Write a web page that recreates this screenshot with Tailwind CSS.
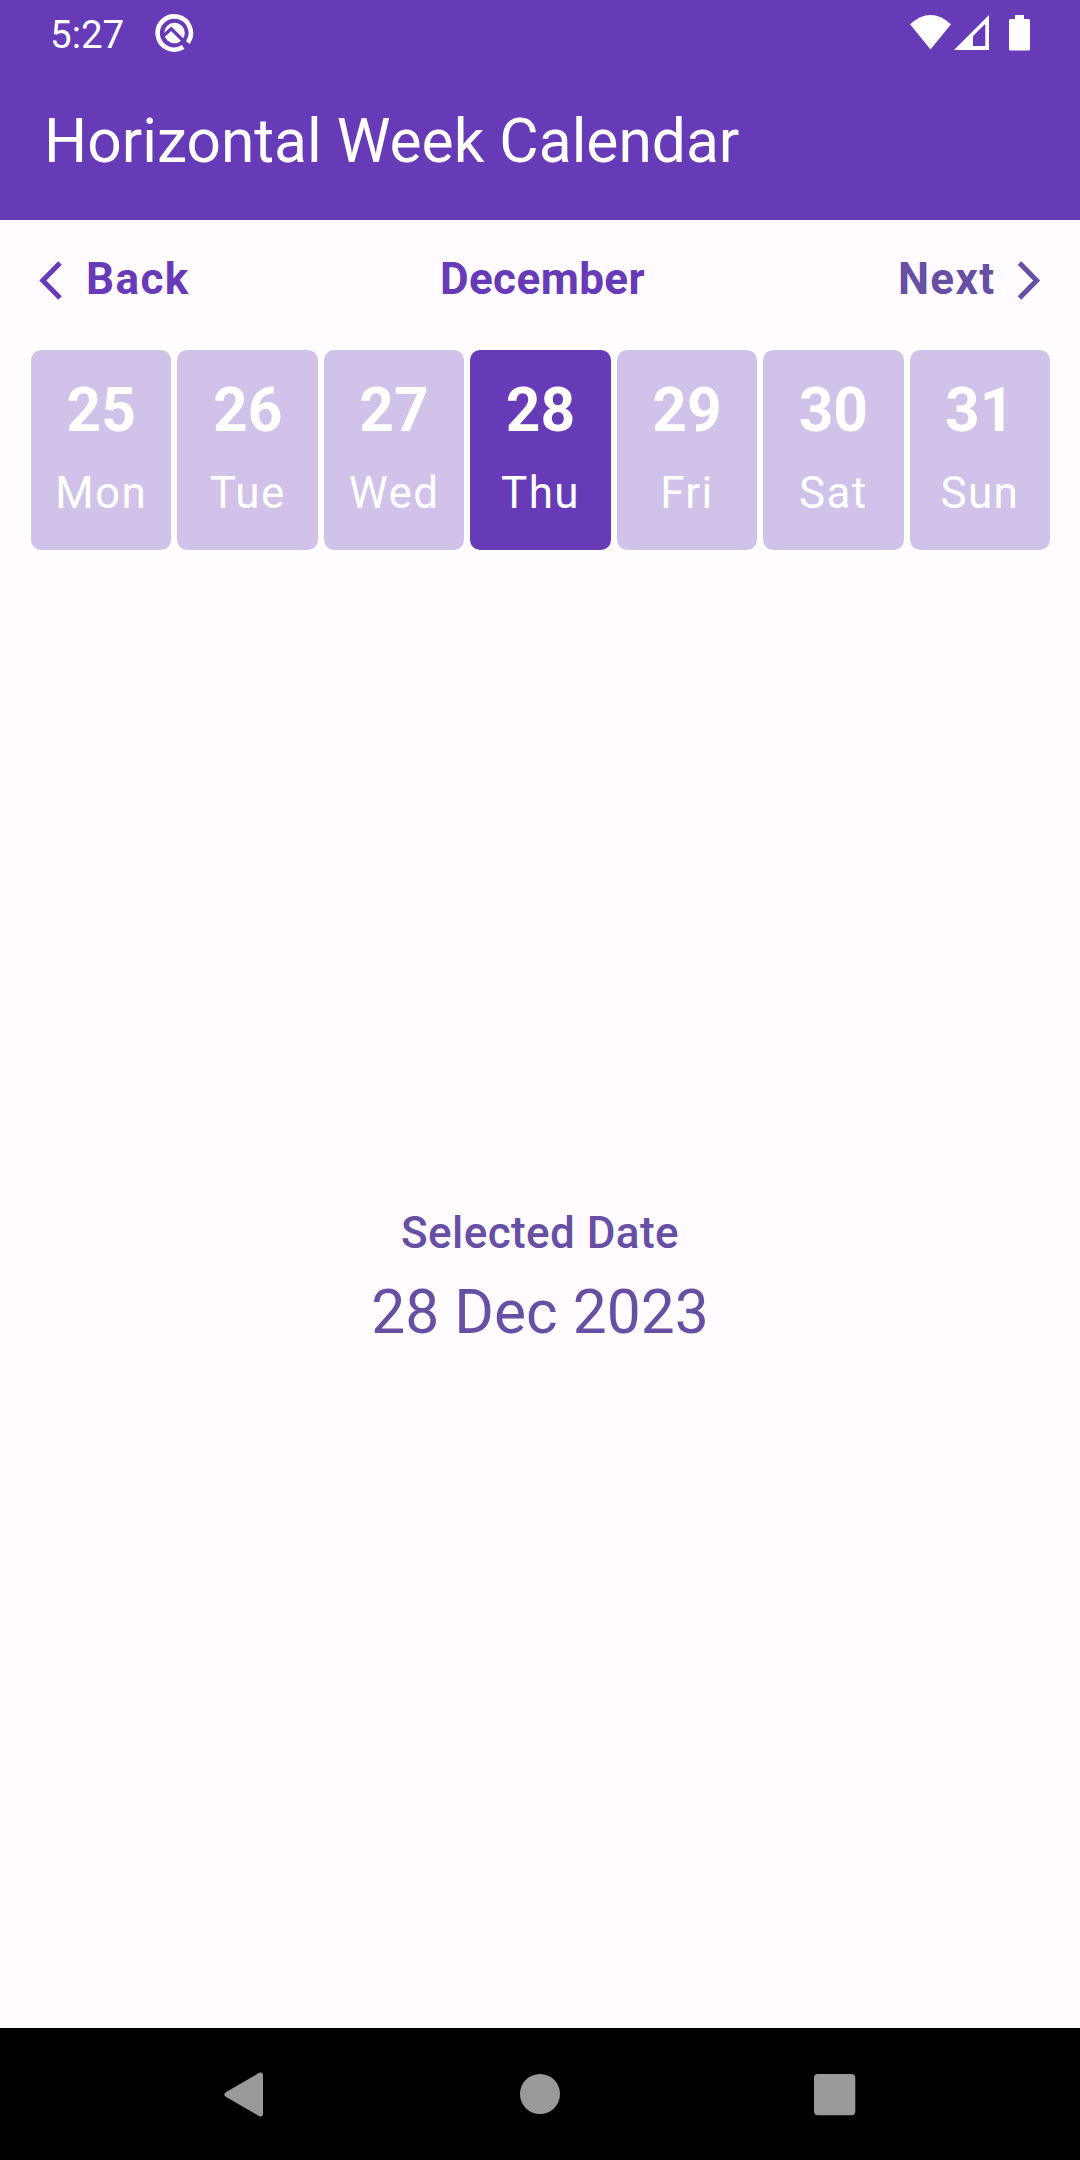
<!DOCTYPE html>
<html lang="en">
<head>
<meta charset="utf-8">
<title>Horizontal Week Calendar</title>
<script src="https://cdn.jsdelivr.net/npm/@tailwindcss/browser@4"></script>
</head>
<body class="flex h-[2160px] w-[1080px] flex-col overflow-hidden bg-[#fffbff] font-[Roboto,sans-serif] text-[44px] leading-[52px] text-[#673ab7]">
  <header class="h-[220px] shrink-0 bg-[#673ab7] text-white">
    <div class="flex h-[66px] items-start justify-between pl-[50px] pr-[48px]">
      <div class="flex pt-[12px]">
        <span class="w-[104px] text-[38.5px] leading-[46px]">5:27</span>
        <svg class="mt-[1px] h-[40px] w-[40px]" viewBox="0 0 40 40" fill="none">
          <path d="M29.2 34A16.6 16.6 0 1 1 33.8 29.6" stroke="#fff" stroke-width="4.6"/>
          <circle cx="20.5" cy="20" r="10.3" fill="#fff"/>
          <path d="M7.500 24.500L17.200 15.800L31.500 30" stroke="#673ab7" stroke-width="3.400"/>
          <path d="M28 28L34.500 34.500" stroke="#673ab7" stroke-width="2.600"/>
        </svg>
      </div>
      <svg class="h-[66px] w-[122px]" viewBox="910 0 122 66" fill="#fff">
        <path d="M910 24.300Q930.500 5.800 951 24.300L930.500 49.500Z"/>
        <path fill-rule="evenodd" d="M954 50L989 15V50ZM973 46H985.300V23.800L973 36Z"/>
        <path d="M1015 15H1024V19H1028.500Q1030 19 1030 20.500V49Q1030 50.500 1028.500 50.500H1010.500Q1009 50.500 1009 49V20.500Q1009 19 1010.500 19H1015Z"/>
      </svg>
    </div>
    <h1 class="pl-[44px] pt-[41px] text-[60.5px] leading-[70px]">Horizontal Week Calendar</h1>
  </header>

  <main class="flex grow flex-col">
    <nav class="grid h-[127px] grid-cols-3 items-start pl-[38px] pr-[38px] pt-[33px] font-bold">
      <button class="flex">
        <svg class="h-[54px] w-[48px]" viewBox="38 253 48 54" fill="none" stroke="#673ab7" stroke-width="5"><path d="M60 263L42.800 280.500L60 298"/></svg>
        <span class="tracking-[1.375px]">Back</span>
      </button>
      <span class="pl-[5px] text-center tracking-[0.4125px]">December</span>
      <button class="flex justify-end text-[#6750a4]">
        <span class="tracking-[1.375px]">Next</span>
        <svg class="h-[54px] w-[46.5px]" viewBox="995.5 253 46.5 54" fill="none" stroke="#6750a4" stroke-width="5"><path d="M1020 263L1037.200 280.500L1020 298"/></svg>
      </button>
    </nav>

    <section id="week" class="grid h-[206px] grid-cols-7 pl-[28px] pr-[27px] text-center text-white"></section>

    <section class="flex grow flex-col items-center pt-[654px] text-[#6750a4]">
      <h2 class="font-medium tracking-[0.4125px]">Selected Date</h2>
      <p class="mt-[19px] text-[60.5px] leading-[70px]">28 Dec 2023</p>
    </section>
  </main>

  <footer class="h-[132px] shrink-0 bg-black">
    <svg class="h-[132px] w-[1080px]" viewBox="0 2028 1080 132" fill="#999">
      <path d="M227 2094.500L260.500 2075V2114Z" stroke="#999" stroke-width="5" stroke-linejoin="round"/>
      <circle cx="540" cy="2094" r="20"/>
      <rect x="814" y="2074" width="41.300" height="41.300" rx="4"/>
    </svg>
  </footer>

  <script>
    const days = [[25,'Mon'],[26,'Tue'],[27,'Wed'],[28,'Thu'],[29,'Fri'],[30,'Sat'],[31,'Sun']];
    document.getElementById('week').innerHTML = days.map(([n, d]) =>
      `<div class="rounded-[13px] border-[3px] border-white pt-[26px] ${n === 28 ? 'bg-[#673ab7]' : 'bg-[#d1c2e9]'}">
        <div class="text-[60.5px] font-bold leading-[70px]">${n}</div>
        <div class="mt-[21px] tracking-[1.375px]">${d}</div>
      </div>`).join('');
  </script>
</body>
</html>
